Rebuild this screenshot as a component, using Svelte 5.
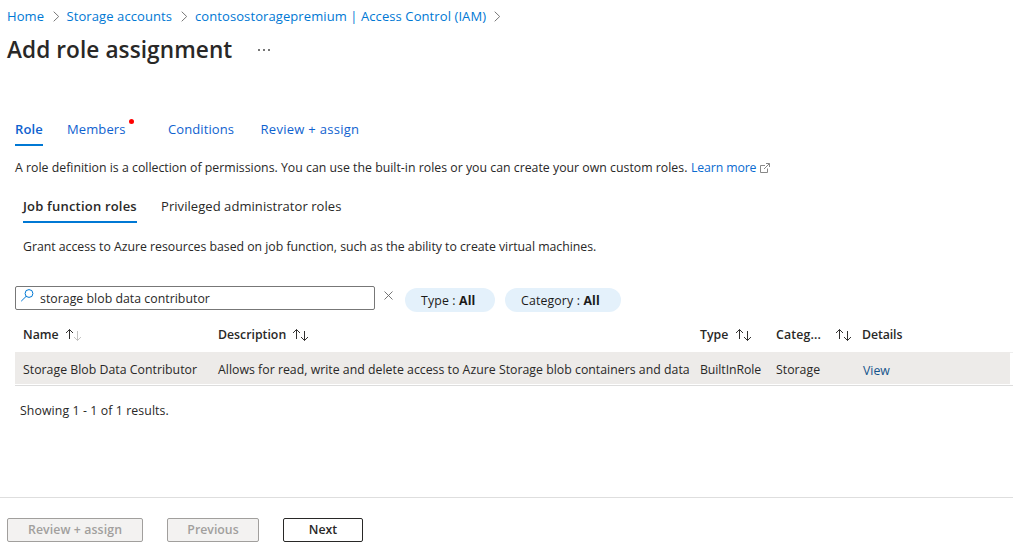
<script>
  const crumbs = [
    { label: 'Home', cls: 'home' },
    { label: 'Storage accounts', cls: 'accounts' },
    { label: 'contosostoragepremium | Access Control (IAM)', cls: 'iam' }
  ];
</script>

{#snippet sort(faded)}
  <svg class="sort" width="17" height="14" viewBox="0 0 17 14" fill="none" stroke="#323130" stroke-width="1">
    <path d="M4.500 11V1.500M1 5l3.500-3.500L8 5" />
    <path d="M12.500 3v9.500M9 9l3.500 3.500L16 9" stroke={faded ? '#c4c3c2' : '#323130'} />
  </svg>
{/snippet}

<main>
  <nav class="crumbs">
    {#each crumbs as c}
      <a class={c.cls}>{c.label}</a>
      <svg width="7" height="11" viewBox="0 0 7 11" fill="none" stroke="#777" stroke-width="1"><path d="M.7.7 5.700 5.500.7 10.300" /></svg>
    {/each}
  </nav>
  <header><h1>Add role assignment</h1><span class="more"><i></i><i></i><i></i></span></header>

  <div class="tabs">
    <a class="role active">Role</a>
    <a class="members">Members<i class="dot"></i></a>
    <a class="conditions">Conditions</a>
    <a class="review">Review + assign</a>
  </div>

  <p class="intro">
    <span>A role definition is a collection of permissions. You can use the built-in roles or you can create your own custom roles.</span>
    <a>Learn more</a>
    <svg width="11" height="10" viewBox="0 0 11 10" fill="none" stroke="#888" stroke-width="1"><path d="M5 2.500H.5v7h7V5.500M6 .5h3.500v3.500M9.300.7 4 6" /></svg>
  </p>

  <div class="subtabs"><span class="job">Job function roles</span><span class="priv">Privileged administrator roles</span></div>
  <p class="grant">Grant access to Azure resources based on job function, such as the ability to create virtual machines.</p>

  <div class="filters">
    <div class="search">
      <svg width="14" height="14" viewBox="0 0 14 14" fill="none" stroke="#0078d4" stroke-width="1"><circle cx="8" cy="4.500" r="3.900" /><path d="M5.200 7.300.2 12.200" /></svg>
      <span>storage blob data contributor</span>
    </div>
    <svg class="clear" width="9" height="9" viewBox="0 0 9 9" stroke="#666" stroke-width=".9"><path d="m.5.5 8 8m0-8-8 8" /></svg>
    <div class="pill type">Type :&nbsp;<b>All</b></div>
    <div class="pill category">Category :&nbsp;<b>All</b></div>
  </div>

  <div class="grid head">
    <span><em class="h-name">Name</em>{@render sort(true)}</span>
    <span><em class="h-desc">Description</em>{@render sort(false)}</span>
    <span><em class="h-type">Type</em>{@render sort(false)}</span>
    <span><em class="h-cat">Categ...</em>{@render sort(false)}</span>
    <span class="h-details">Details</span>
  </div>
  <div class="rowwrap">
    <div class="grid row">
      <span class="c-name">Storage Blob Data Contributor</span>
      <span class="c-desc">Allows for read, write and delete access to Azure Storage blob containers and data</span>
      <span class="c-type">BuiltInRole</span>
      <span class="c-cat">Storage</span>
      <a>View</a>
    </div>
  </div>
  <p class="count">Showing 1 - 1 of 1 results.</p>

  <footer>
    <button class="b-review" disabled>Review + assign</button>
    <button class="b-prev" disabled>Previous</button>
    <button class="b-next">Next</button>
  </footer>
</main>

<style>
  :global(body) { background: #fff; }
  main { width: 1013px; height: 553px; box-sizing: border-box; overflow: hidden; display: flex; flex-direction: column; background: #fff; color: #292827; font: 12.3px/18px "Open Sans", "Noto Sans", sans-serif; white-space: nowrap; }
  p, h1 { margin: 0; }
  svg { flex: none; display: block; }
  a { color: #0f62cf; text-decoration: none; }
  em { font-style: normal; }
  .crumbs { height: 33px; padding: 0 0 2px 7px; box-sizing: border-box; display: flex; align-items: center; font-size: 13px; letter-spacing: .09px; }
  .crumbs a { color: #0078d4; }
  .crumbs svg { margin: 2px 7px 0 7.500px; }
  .home { width: 38px; }
  .accounts { width: 107px; }
  .iam { width: 291px; }
  header { height: 34px; padding-left: 7px; display: flex; align-items: center; }
  h1 { width: 251px; font-size: 22.6px; line-height: 34px; font-weight: 600; letter-spacing: .08px; }
  .more { display: flex; gap: 3px; }
  .more i { width: 2px; height: 2px; background: #777; }
  .tabs { height: 26px; margin-top: 53px; padding-left: 15px; display: flex; font-size: 13px; letter-spacing: .1px; }
  .tabs a { height: 26px; line-height: 18px; box-sizing: border-box; position: relative; }
  .role { width: 28px; margin-right: 24px; }
  .active { font-weight: 600; border-bottom: 2px solid #0078d4; }
  .members { width: 101px; }
  .conditions { width: 92.500px; }
  .review { letter-spacing: .28px; }
  .dot { position: absolute; left: 62px; top: -1px; width: 5px; height: 5px; border-radius: 50%; background: #f00; }
  .intro { height: 18px; margin-top: 13px; padding-left: 15px; display: flex; align-items: center; }
  .intro span { width: 676px; letter-spacing: .012px; }
  .intro a { width: 69px; letter-spacing: -.13px; color: #0b6bd0; }
  .subtabs { height: 26px; margin-top: 20px; padding-left: 23px; display: flex; font-size: 13px; }
  .subtabs span { box-sizing: border-box; height: 26px; line-height: 18px; letter-spacing: .06px; }
  .subtabs .job { width: 114px; margin-right: 24px; font-weight: 600; border-bottom: 2px solid #0078d4; letter-spacing: .2px; }
  .grant { margin-top: 15px; padding-left: 23px; letter-spacing: -.02px; }
  .filters { height: 26px; margin-top: 30px; padding-left: 15px; display: flex; align-items: flex-start; }
  .search { width: 360px; height: 24px; box-sizing: border-box; border: 1px solid #777; border-radius: 2px; display: flex; padding-left: 5px; }
  .search svg { margin: 2px 5px 0 0; }
  .search span { line-height: 23px; letter-spacing: .03px; }
  .clear { margin: 5px 12px 0 9px; }
  .pill { height: 24px; margin-top: 2px; box-sizing: border-box; border-radius: 12px; background: #e4f1fb; padding-left: 16px; line-height: 25px; color: #1b1a19; letter-spacing: .15px; }
  .type { width: 90px; margin-right: 10px; }
  .category { width: 116px; }
  .grid { display: grid; grid-template-columns: 195px 482px 76px 87px 1fr; align-items: center; }
  .head { height: 40px; padding: 5px 0 0 23px; box-sizing: border-box; font-weight: 600; }
  .head span { display: flex; align-items: center; }
  .head .h-details { margin-left: -1px; letter-spacing: -.08px; }
  .h-name { width: 42px; }
  .h-desc { width: 74px; }
  .h-type { width: 35px; }
  .h-cat { width: 59px; letter-spacing: .15px; }
  .rowwrap { margin-left: 15px; height: 34px; box-sizing: border-box; border-top: 1px solid #eee; border-bottom: 1px solid #ddd; }
  .row { width: 995px; height: 32px; margin-top: -1px; padding-left: 8px; box-sizing: border-box; background: #edebe9; align-items: start; }
  .row span { line-height: 36px; height: 32px; letter-spacing: .015px; }
  .row .c-type { letter-spacing: -.08px; }
  .row a { color: #15548c; line-height: 38px; height: 32px; }
  .count { margin-top: 16px; padding-left: 20px; letter-spacing: .1px; }
  footer { margin-top: auto; height: 56px; box-sizing: border-box; border-top: 1px solid #dedede; padding: 20px 7px 0; display: flex; gap: 24px; }
  button { height: 24px; padding: 0; border: 1px solid #292827; border-radius: 2px; background: #fff; color: #292827; font: 600 12.3px/20px "Open Sans", "Noto Sans", sans-serif; }
  button:disabled { background: #f3f2f1; color: #a19f9d; border-color: #a19f9d; }
  .b-review { width: 136px; letter-spacing: .1px; }
  .b-prev { width: 92px; }
  .b-next { width: 80px; }
</style>
